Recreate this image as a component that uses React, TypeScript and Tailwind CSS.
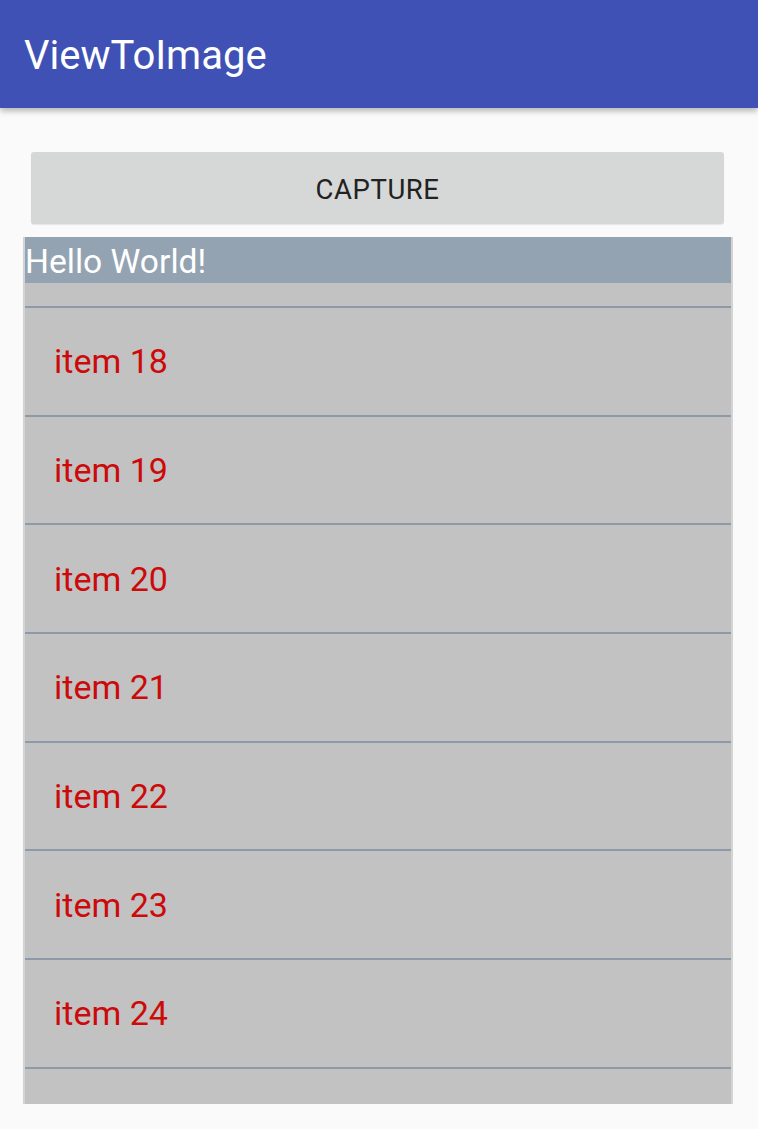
import React from "react";

const items = [18, 19, 20, 21, 22, 23, 24];

export default function App() {
  return (
    <div className="min-h-screen h-[1129px] bg-[#fafafa] overflow-hidden" style={{ fontFamily: "Roboto, 'Noto Sans', sans-serif" }}>
      <header className="relative z-10 h-[108px] bg-[#3f51b5] flex items-center pl-[24px] pt-[4px] shadow-[0_3px_6px_rgba(0,0,0,0.28)]">
        <h1 className="text-white text-[40px] leading-none font-normal">ViewToImage</h1>
      </header>
      <main className="pt-[44px] pl-[23px] pr-[25px]">
        <div className="px-[8px] pr-[9px]">
          <button className="w-full h-[72px] pt-[3px] bg-[#d6d7d7] rounded-[3px] shadow-[0_1px_1px_rgba(0,0,0,0.08)] text-[#222] text-[27.5px] tracking-[0.6px] flex items-center justify-center">
            CAPTURE
          </button>
        </div>
        <div className="mt-[13px] h-[867px] bg-[#c2c2c2] border-x-2 border-[#d3d3d3] overflow-hidden">
          <div className="h-[46px] bg-[#94a3b2] flex items-center pt-[3px] text-white text-[33.6px] leading-none">
            Hello World!
          </div>
          <div className="h-[25px] border-b-2 border-[#8e9aa8]" />
          {items.map((n) => (
            <div key={n} className="h-[108.7px] border-b-2 border-[#8e9aa8] flex items-center pl-[29px] text-[#cc0a0a] text-[34px] leading-none">
              item {n}
            </div>
          ))}
        </div>
      </main>
    </div>
  );
}
